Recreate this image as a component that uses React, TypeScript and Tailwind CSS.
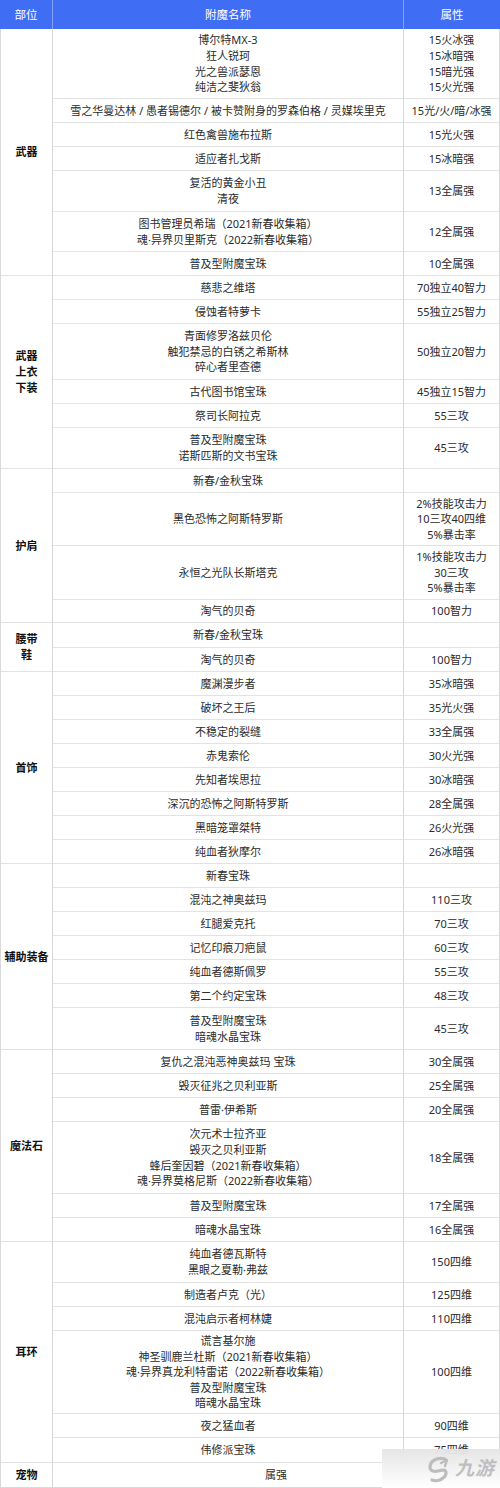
import React from "react";

type Row = { names: string[]; value: string[]; h: string };
type Group = { label: string[]; rows: Row[] };

const GROUPS: Group[] = [
  {
    label: ["武器"],
    rows: [
      {
        names: ["博尔特MX-3", "狂人锐珂", "光之兽派瑟恩", "纯洁之斐狄翁"],
        value: ["15火冰强", "15冰暗强", "15暗光强", "15火光强"],
        h: "h-[70px]",
      },
      {
        names: ["雪之华曼达林 / 愚者锡德尔 / 被卡赞附身的罗森伯格 / 灵媒埃里克"],
        value: ["15光/火/暗/冰强"],
        h: "h-[24px]",
      },
      { names: ["红色禽兽施布拉斯"], value: ["15光火强"], h: "h-[24px]" },
      { names: ["适应者扎戈斯"], value: ["15冰暗强"], h: "h-[24px]" },
      { names: ["复活的黄金小丑", "清夜"], value: ["13全属强"], h: "h-[41px]" },
      {
        names: ["图书管理员希瑞（2021新春收集箱）", "魂·异界贝里斯克（2022新春收集箱）"],
        value: ["12全属强"],
        h: "h-[40px]",
      },
      { names: ["普及型附魔宝珠"], value: ["10全属强"], h: "h-[24px]" },
    ],
  },
  {
    label: ["武器", "上衣", "下装"],
    rows: [
      { names: ["慈悲之维塔"], value: ["70独立40智力"], h: "h-[24px]" },
      { names: ["侵蚀者特萝卡"], value: ["55独立25智力"], h: "h-[24px]" },
      {
        names: ["青面修罗洛兹贝伦", "触犯禁忌的白锈之希斯林", "碎心者里查德"],
        value: ["50独立20智力"],
        h: "h-[56px]",
      },
      { names: ["古代图书馆宝珠"], value: ["45独立15智力"], h: "h-[24px]" },
      { names: ["祭司长阿拉克"], value: ["55三攻"], h: "h-[24px]" },
      { names: ["普及型附魔宝珠", "诺斯匹斯的文书宝珠"], value: ["45三攻"], h: "h-[41px]" },
    ],
  },
  {
    label: ["护肩"],
    rows: [
      { names: ["新春/金秋宝珠"], value: [], h: "h-[24px]" },
      {
        names: ["黑色恐怖之阿斯特罗斯"],
        value: ["2%技能攻击力", "10三攻40四维", "5%暴击率"],
        h: "h-[53px]",
      },
      {
        names: ["永恒之光队长斯塔克"],
        value: ["1%技能攻击力", "30三攻", "5%暴击率"],
        h: "h-[54px]",
      },
      { names: ["淘气的贝奇"], value: ["100智力"], h: "h-[23px]" },
    ],
  },
  {
    label: ["腰带", "鞋"],
    rows: [
      { names: ["新春/金秋宝珠"], value: [], h: "h-[25px]" },
      { names: ["淘气的贝奇"], value: ["100智力"], h: "h-[24px]" },
    ],
  },
  {
    label: ["首饰"],
    rows: [
      { names: ["魔渊漫步者"], value: ["35冰暗强"], h: "h-[24px]" },
      { names: ["破坏之王后"], value: ["35光火强"], h: "h-[24px]" },
      { names: ["不稳定的裂缝"], value: ["33全属强"], h: "h-[24px]" },
      { names: ["赤鬼索伦"], value: ["30火光强"], h: "h-[24px]" },
      { names: ["先知者埃思拉"], value: ["30冰暗强"], h: "h-[24px]" },
      { names: ["深沉的恐怖之阿斯特罗斯"], value: ["28全属强"], h: "h-[24px]" },
      { names: ["黑暗笼罩桀特"], value: ["26火光强"], h: "h-[24px]" },
      { names: ["纯血者狄摩尔"], value: ["26冰暗强"], h: "h-[24px]" },
    ],
  },
  {
    label: ["辅助装备"],
    rows: [
      { names: ["新春宝珠"], value: [], h: "h-[24px]" },
      { names: ["混沌之神奥兹玛"], value: ["110三攻"], h: "h-[24px]" },
      { names: ["红腿爱克托"], value: ["70三攻"], h: "h-[24px]" },
      { names: ["记忆印痕刀疤鼠"], value: ["60三攻"], h: "h-[24px]" },
      { names: ["纯血者德斯佩罗"], value: ["55三攻"], h: "h-[24px]" },
      { names: ["第二个约定宝珠"], value: ["48三攻"], h: "h-[24px]" },
      { names: ["普及型附魔宝珠", "暗魂水晶宝珠"], value: ["45三攻"], h: "h-[42px]" },
    ],
  },
  {
    label: ["魔法石"],
    rows: [
      { names: ["复仇之混沌恶神奥兹玛 宝珠"], value: ["30全属强"], h: "h-[24px]" },
      { names: ["毁灭征兆之贝利亚斯"], value: ["25全属强"], h: "h-[24px]" },
      { names: ["普雷·伊希斯"], value: ["20全属强"], h: "h-[24px]" },
      {
        names: [
          "次元术士拉齐亚",
          "毁灭之贝利亚斯",
          "蜂后奎因碧（2021新春收集箱）",
          "魂·异界莫格尼斯（2022新春收集箱）",
        ],
        value: ["18全属强"],
        h: "h-[72px]",
      },
      { names: ["普及型附魔宝珠"], value: ["17全属强"], h: "h-[24px]" },
      { names: ["暗魂水晶宝珠"], value: ["16全属强"], h: "h-[24px]" },
    ],
  },
  {
    label: ["耳环"],
    rows: [
      { names: ["纯血者德瓦斯特", "黑眼之夏勒·弗兹"], value: ["150四维"], h: "h-[41px]" },
      { names: ["制造者卢克（光）"], value: ["125四维"], h: "h-[24px]" },
      { names: ["混沌启示者柯林婕"], value: ["110四维"], h: "h-[24px]" },
      {
        names: [
          "谎言基尔施",
          "神圣驯鹿兰杜斯（2021新春收集箱）",
          "魂·异界真龙利特雷诺（2022新春收集箱）",
          "普及型附魔宝珠",
          "暗魂水晶宝珠",
        ],
        value: ["100四维"],
        h: "h-[83px]",
      },
      { names: ["夜之猛血者"], value: ["90四维"], h: "h-[24px]" },
      { names: ["伟修派宝珠"], value: ["75四维"], h: "h-[25px]" },
    ],
  },
];

function Lines({ items }: { items: string[] }) {
  return (
    <div className="flex flex-col items-center text-center leading-[15.6px]">
      {items.map((t, i) => (
        <span key={i} className="whitespace-nowrap">
          {t}
        </span>
      ))}
    </div>
  );
}

function Watermark() {
  return (
    <div className="absolute right-0 bottom-0 w-[118px] h-[39px] flex items-center justify-end pr-[5px] gap-[2px] bg-gradient-to-b from-[#e4e4e4]/95 to-white">
      <svg width="30" height="30" viewBox="0 0 30 30" fill="none" className="text-[#bdbdbd]">
        <path
          d="M22 5 C14 3 7 7 7 13 C7 17 11 18 15 17 L20 16 C24 16 24 21 20 24 C17 27 12 27 9 26"
          stroke="currentColor"
          strokeWidth="3.2"
          strokeLinecap="round"
        />
        <path d="M18 9 L24 6 L22 12" stroke="currentColor" strokeWidth="2.4" strokeLinecap="round" strokeLinejoin="round" />
      </svg>
      <span className="text-[19px] italic font-bold tracking-[1px] text-[#bfbfbf] leading-none">九游</span>
    </div>
  );
}

export default function App() {
  return (
    <div
      className="relative w-[500px] bg-white text-[11px] text-[#2b2b2b]"
      style={{ fontFamily: '"Noto Sans", "Noto Sans CJK SC", sans-serif' }}
    >
      {/* 表头 */}
      <div className="flex h-[29px] bg-[#3f6ef5] text-white text-[11.5px]">
        <div className="w-[53px] flex items-center justify-center border-r border-[#86a3f8]">部位</div>
        <div className="w-[351px] flex items-center justify-center border-r border-[#86a3f8]">附魔名称</div>
        <div className="flex-1 flex items-center justify-center">属性</div>
      </div>

      {GROUPS.map((g, gi) => (
        <div key={gi} className="flex border-l border-r border-[#d9d9d9]">
          <div className="w-[52px] shrink-0 flex flex-col items-center justify-center border-r border-r-[#d6d6d6] border-b border-b-[#e2e2e2] font-bold text-[#111111] leading-[16px]">
            {g.label.map((l, li) => (
              <span key={li}>{l}</span>
            ))}
          </div>
          <div className="flex-1 flex flex-col">
            {g.rows.map((r, ri) => (
              <div key={ri} className={`flex border-b border-[#e2e2e2] ${r.h}`}>
                <div className="w-[351px] shrink-0 flex items-center justify-center border-r border-[#d6d6d6]">
                  <Lines items={r.names} />
                </div>
                <div className="flex-1 flex items-center justify-center">
                  <Lines items={r.value} />
                </div>
              </div>
            ))}
          </div>
        </div>
      ))}

      {/* 宠物 */}
      <div className="flex h-[25px] border-l border-r border-b border-[#d9d9d9]">
        <div className="w-[52px] shrink-0 flex items-center justify-center border-r border-[#d6d6d6] font-bold text-[#111111]">
          宠物
        </div>
        <div className="flex-1 flex items-center justify-center">属强</div>
      </div>

      <Watermark />
    </div>
  );
}
